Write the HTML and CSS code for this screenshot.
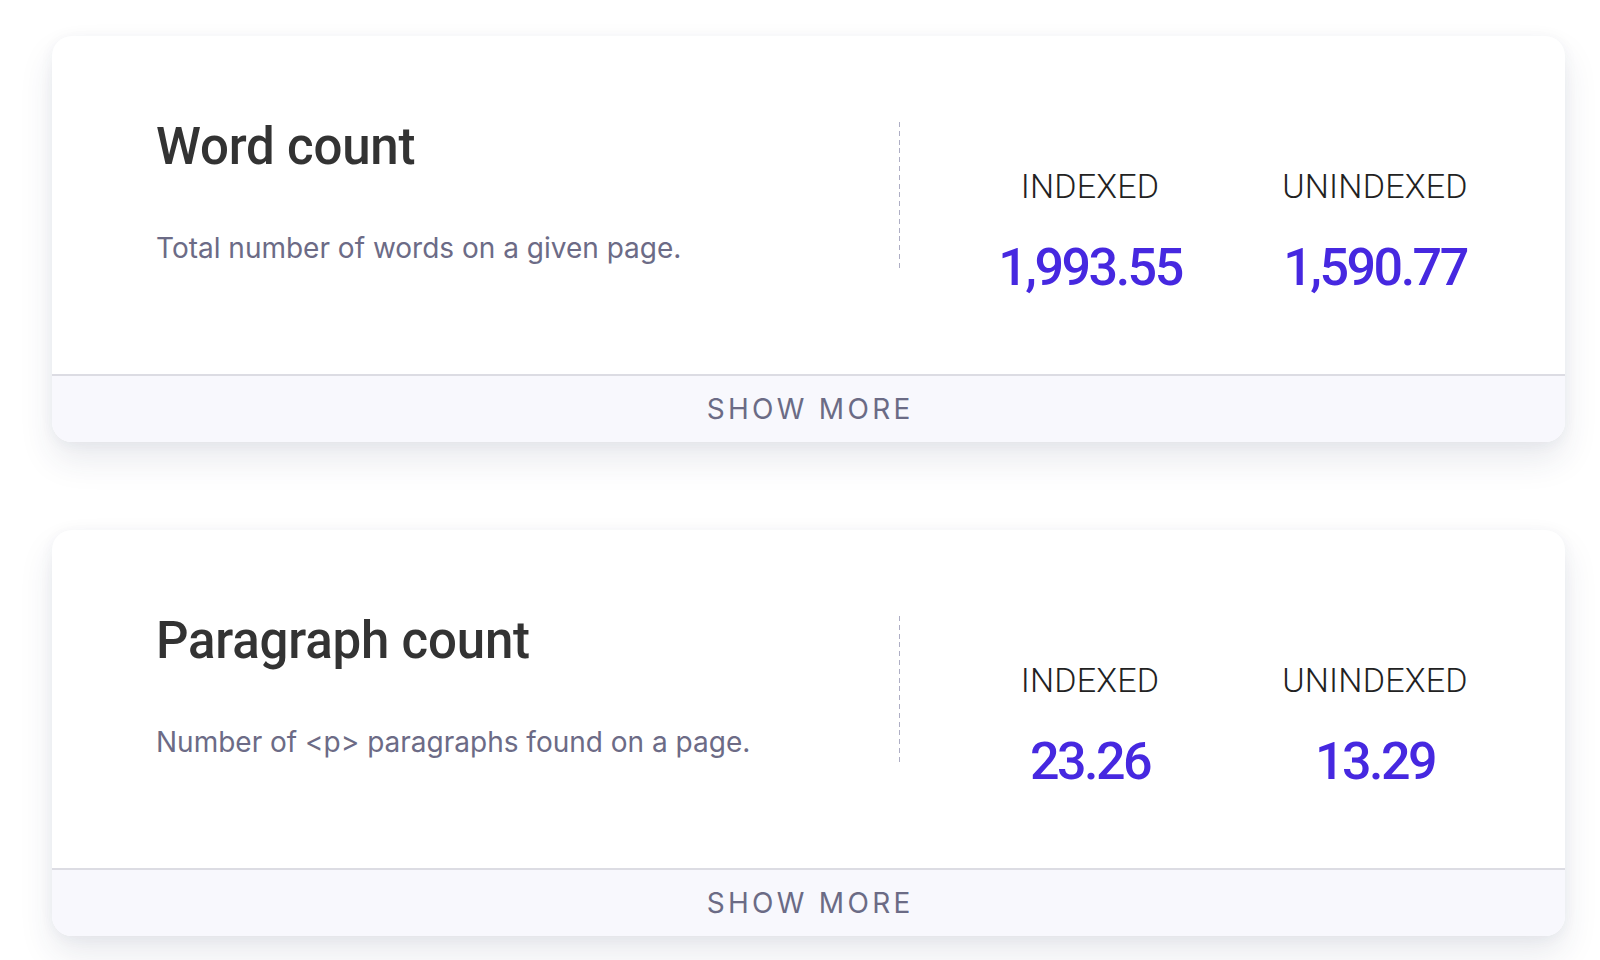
FILE: index.html
```html
<!DOCTYPE html>
<html lang="en">
<head>
<meta charset="utf-8">
<title>Metrics</title>
<link rel="stylesheet" href="styles.css">
</head>
<body>
<main class="page">
  <section class="card">
    <div class="card-body">
      <div class="info">
        <h2 class="title">Word count</h2>
        <p class="desc">Total number of words on a given page.</p>
      </div>
      <div class="divider"></div>
      <div class="stats">
        <div class="stat">
          <div class="label">INDEXED</div>
          <div class="value">1,993.55</div>
        </div>
        <div class="stat">
          <div class="label">UNINDEXED</div>
          <div class="value">1,590.77</div>
        </div>
      </div>
    </div>
    <div class="card-footer">SHOW MORE</div>
  </section>
  <section class="card">
    <div class="card-body">
      <div class="info">
        <h2 class="title">Paragraph count</h2>
        <p class="desc">Number of &lt;p&gt; paragraphs found on a page.</p>
      </div>
      <div class="divider"></div>
      <div class="stats">
        <div class="stat">
          <div class="label">INDEXED</div>
          <div class="value">23.26</div>
        </div>
        <div class="stat">
          <div class="label">UNINDEXED</div>
          <div class="value">13.29</div>
        </div>
      </div>
    </div>
    <div class="card-footer">SHOW MORE</div>
  </section>
</main>
</body>
</html>
```

FILE: styles.css
```css
html, body {
  margin: 0;
  padding: 0;
  background: #ffffff;
}

body {
  font-family: Inter, "Noto Sans", sans-serif;
}

.page {
  display: flex;
  flex-direction: column;
  gap: 88px;
  padding: 36px 35px 60px 52px;
  min-height: 960px;
  box-sizing: border-box;
}

.card {
  background: #ffffff;
  border-radius: 20px;
  overflow: hidden;
  box-shadow: 0 18px 34px rgba(40, 50, 90, 0.10), 0 2px 14px rgba(40, 50, 90, 0.05);
}

.card-body {
  display: flex;
  align-items: flex-start;
  height: 338px;
  box-sizing: border-box;
  padding: 81px 90px 0 104px;
}

.info {
  flex: 1;
  min-width: 0;
}

.title {
  margin: 0;
  font-family: Roboto, "Liberation Sans", sans-serif;
  font-weight: 500;
  font-size: 51px;
  line-height: 60px;
  color: #333333;
  letter-spacing: -0.2px;
}

.desc {
  margin: 53px 0 0;
  font-family: Inter, "Noto Sans", sans-serif;
  font-weight: 400;
  font-size: 28px;
  line-height: 36px;
  color: #6c6b86;
}

.divider {
  width: 1px;
  height: 150px;
  margin-top: 5px;
  margin-right: 90px;
  background: repeating-linear-gradient(to bottom, #aeaec4 0, #aeaec4 5px, transparent 5px, transparent 8.8px);
}

.stats {
  display: flex;
  gap: 85px;
  margin-top: 49px;
}

.stat {
  width: 200px;
  text-align: center;
}

.label {
  font-family: Roboto, "Liberation Sans", sans-serif;
  font-weight: 300;
  font-size: 34px;
  line-height: 40px;
  color: #222222;
  letter-spacing: 0.2px;
}

.value {
  margin-top: 32px;
  font-family: Roboto, "Liberation Sans", sans-serif;
  font-weight: 500;
  font-size: 52px;
  line-height: 60px;
  color: #4628e0;
  letter-spacing: -2.5px;
}

.card-footer {
  height: 66px;
  border-top: 2px solid #dcdce3;
  background: #f8f8fd;
  display: flex;
  align-items: center;
  justify-content: center;
  font-family: Inter, "Noto Sans", sans-serif;
  font-size: 28px;
  letter-spacing: 3.3px;
  color: #6b6b85;
  padding-left: 3.3px;
}
```
